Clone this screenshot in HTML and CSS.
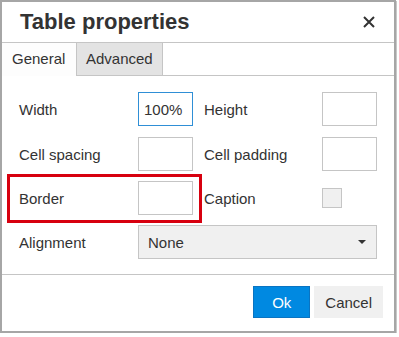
FILE: index.html
```html
<!DOCTYPE html>
<html lang="en">
<head>
    <meta charset="UTF-8">
    <title>Table properties</title>
    <link rel="stylesheet" href="styles.css">
</head>
<body>
    <div class="dialog">
        <div class="head">
            <h1>Table properties</h1>
            <button class="close" type="button" aria-label="Close">
                <svg width="12" height="12" viewBox="0 0 12 12">
                    <path d="M1 1 L11 11 M11 1 L1 11" stroke="#333" stroke-width="2" fill="none"/>
                </svg>
            </button>
        </div>
        <div class="tabs">
            <div class="tab active">General</div>
            <div class="tab">Advanced</div>
            <div class="tab-rest"></div>
        </div>
        <form class="form">
            <div class="row first">
                <label for="width">Width</label>
                <input type="text" id="width" class="field focus" value="100%">
                <label for="height" class="second">Height</label>
                <input type="text" id="height" class="field">
            </div>
            <div class="row">
                <label for="spacing">Cell spacing</label>
                <input type="text" id="spacing" class="field">
                <label for="padding" class="second">Cell padding</label>
                <input type="text" id="padding" class="field">
            </div>
            <div class="row">
                <label for="border">Border</label>
                <input type="text" id="border" class="field">
                <label for="caption" class="second">Caption</label>
                <span class="check-cell"><input type="checkbox" id="caption" class="check"></span>
            </div>
            <div class="row">
                <label for="align">Alignment</label>
                <div class="select" id="align">
                    <span>None</span>
                    <span class="caret"></span>
                </div>
            </div>
            <div class="highlight"></div>
        </form>
        <div class="foot">
            <button type="button" class="btn primary">Ok</button>
            <button type="button" class="btn">Cancel</button>
        </div>
    </div>
</body>
</html>
```

FILE: styles.css
```css
body {
    margin: 0;
    background: #fff;
    font-family: "Liberation Sans", Arial, sans-serif;
    font-size: 15px;
    color: #333;
}
.dialog {
    width: 396px;
    height: 333px;
    box-sizing: border-box;
    border: 2px solid #a6a6a6;
    box-shadow: 1px 1px 0 #c8c8c8;
    background: #fff;
    display: flex;
    flex-direction: column;
}
.head {
    height: 40px;
    border-bottom: 1px solid #c5c5c5;
    display: flex;
    align-items: center;
    justify-content: space-between;
    padding: 0 19px 0 18px;
}
.head h1 {
    margin: 0;
    font-size: 22px;
    font-weight: bold;
    color: #333;
}
.close {
    border: none;
    background: none;
    padding: 0;
    width: 12px;
    height: 12px;
    display: flex;
}
.tabs {
    display: flex;
    height: 33px;
}
.tab {
    box-sizing: border-box;
    height: 33px;
    line-height: 31px;
    padding: 0 9px;
    border: 1px solid #c5c5c5;
    border-top: none;
    background: #e3e3e3;
    color: #333;
}
.tab.active {
    width: 74px;
    padding-left: 10px;
    background: #fdfdfd;
    border: none;
}
.tab-rest {
    flex: 1;
    border-bottom: 1px solid #c5c5c5;
}
.form {
    position: relative;
    flex: 1;
    padding: 16px 0 0 17px;
    display: flex;
    flex-direction: column;
    gap: 10px;
}
.row {
    display: grid;
    grid-template-columns: 119px 55px 129px 55px;
    align-items: center;
    height: 34px;
}
.row.first {
    margin-bottom: 1px;
}
.row .second {
    padding-left: 11px;
}
.field {
    box-sizing: border-box;
    width: 55px;
    height: 34px;
    border: 1px solid #c5c5c5;
    padding: 0 5px;
    font-family: inherit;
    font-size: 15px;
    color: #333;
    background: #fff;
    outline: none;
}
.field.focus {
    border-color: #2f8fd6;
}
.check-cell {
    display: flex;
}
.check {
    appearance: none;
    margin: 0;
    width: 20px;
    height: 20px;
    box-sizing: border-box;
    border: 1px solid #c5c5c5;
    background: #f0f0f0;
}
.select {
    grid-column: 2 / 5;
    box-sizing: border-box;
    height: 34px;
    border: 1px solid #c5c5c5;
    background: #f0f0f0;
    display: flex;
    align-items: center;
    justify-content: space-between;
    padding: 0 10px 0 9px;
}
.caret {
    width: 0;
    height: 0;
    border-left: 4px solid transparent;
    border-right: 4px solid transparent;
    border-top: 4px solid #333;
}
.highlight {
    position: absolute;
    left: 5px;
    top: 98px;
    width: 195px;
    height: 49px;
    box-sizing: border-box;
    border: 3px solid #d7000f;
}
.foot {
    height: 57px;
    box-sizing: border-box;
    border-top: 1px solid #c5c5c5;
    display: flex;
    justify-content: flex-end;
    align-items: flex-start;
    gap: 4px;
    padding: 11px 11px 0 0;
}
.btn {
    box-sizing: border-box;
    height: 32px;
    padding: 0 10px;
    border: 1px solid #f0f0f0;
    background: #f0f0f0;
    font-family: inherit;
    font-size: 15px;
    color: #333;
}
.btn.primary {
    width: 57px;
    background: #0089e1;
    border-color: #0a74c2;
    color: #fff;
}
```
